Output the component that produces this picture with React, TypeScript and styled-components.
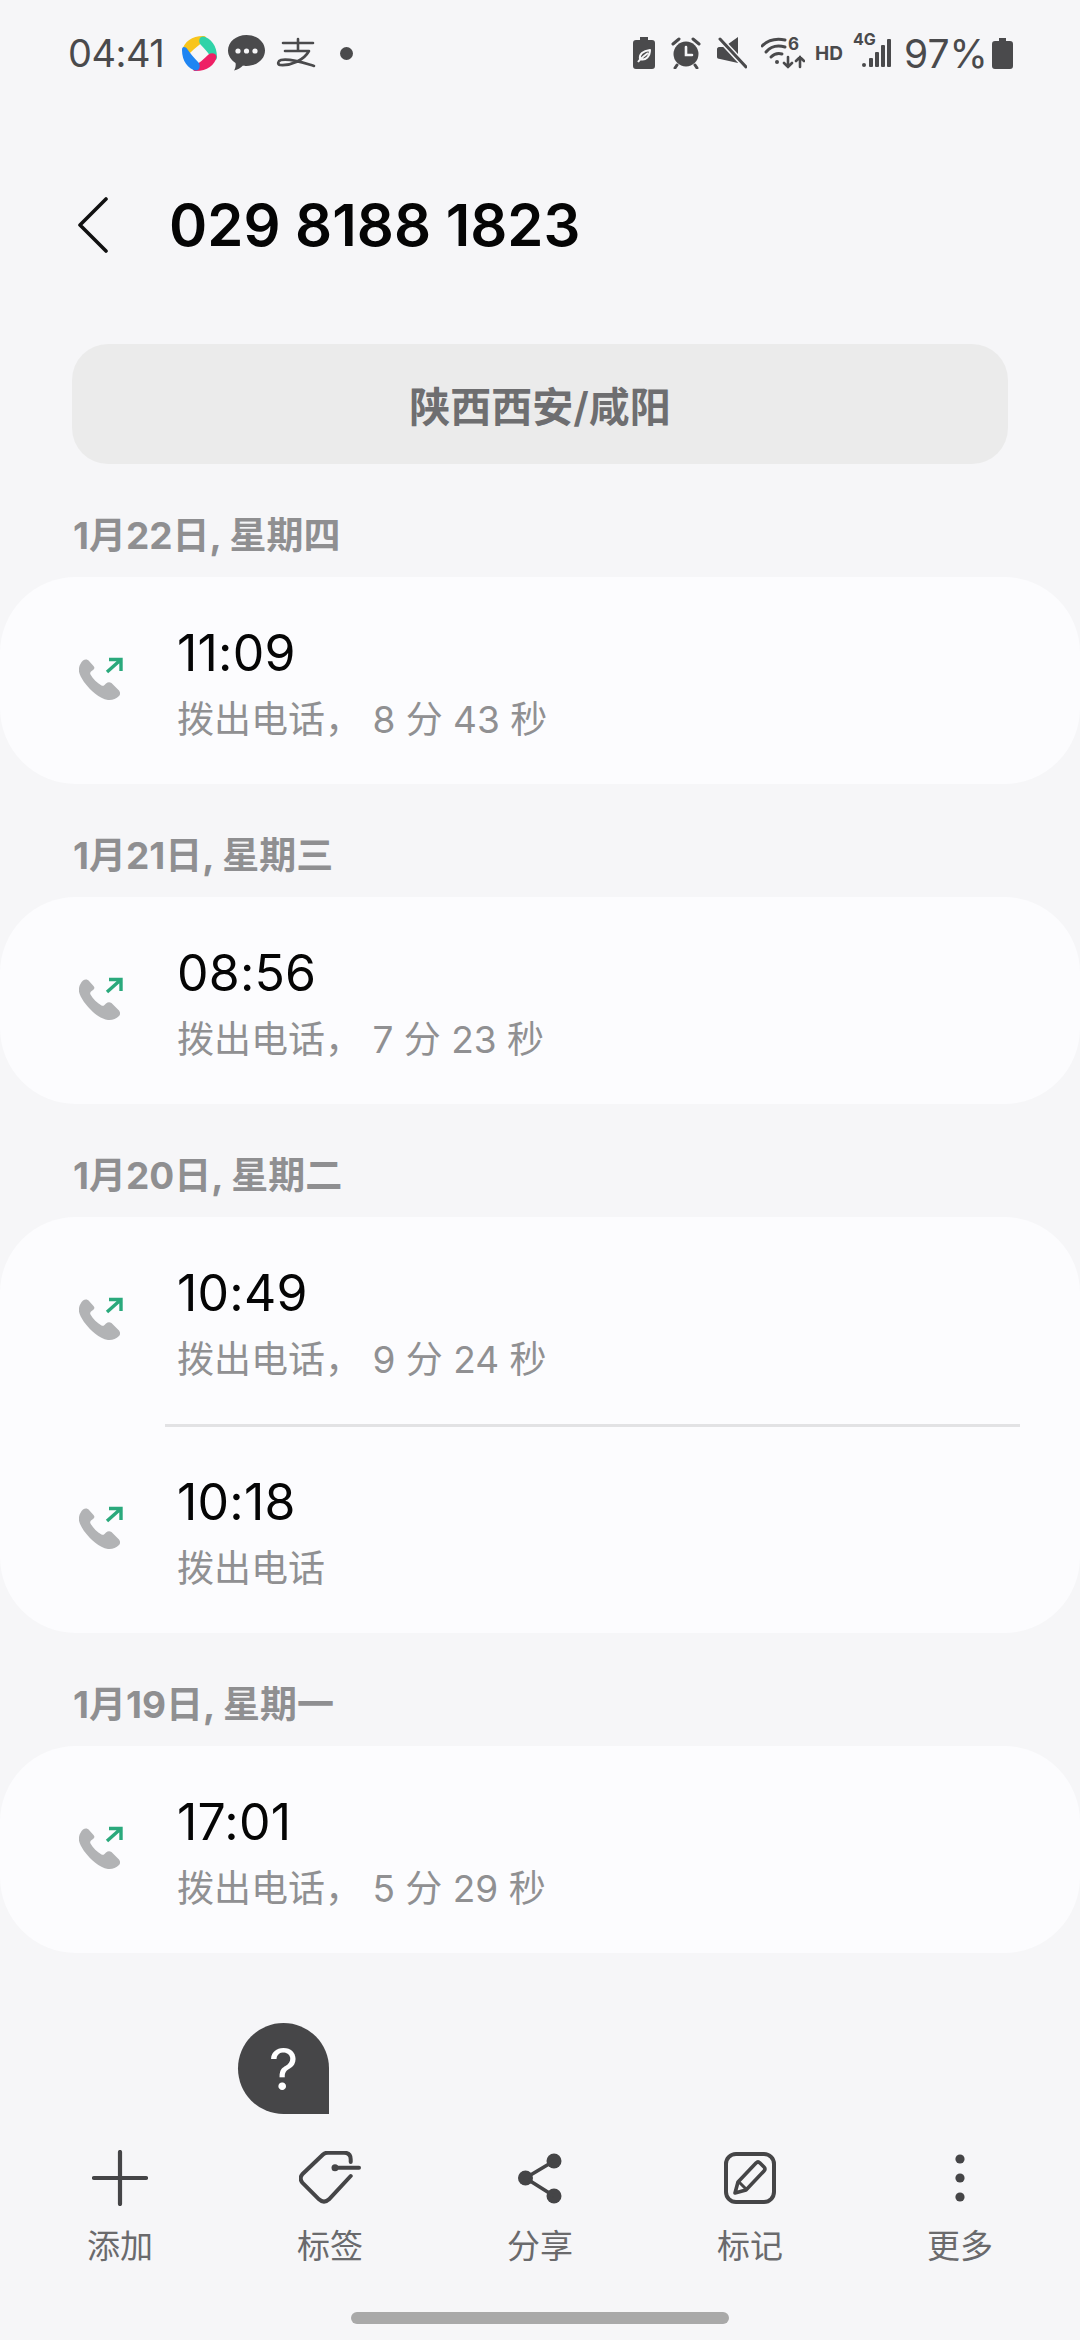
import React from 'react';
import styled, { createGlobalStyle } from 'styled-components';

const Global = createGlobalStyle`
  html, body { margin: 0; padding: 0; background: #f6f6f8; }
  * { box-sizing: border-box; }
`;
const FONT = `Inter, "Noto Sans CJK SC", "Noto Sans", sans-serif`;

const Page = styled.div`
  position: relative; width: 1080px; height: 2340px; background: #f6f6f8;
  display: flex; flex-direction: column; font-family: ${FONT}; overflow: hidden;
`;
const StatusBar = styled.div`
  height: 106px; padding: 0 67px 0 68px; display: flex; align-items: center;
  justify-content: space-between; color: #4a4a4c;
`;
const StatusGroup = styled.div`display: flex; align-items: center;`;
const Clock = styled.span`font-size: 38px; font-weight: 400; width: 113px; line-height: 1; letter-spacing: -0.5px;`;
const NotifDot = styled.span`width: 13px; height: 13px; border-radius: 50%; background: #4a4a4c; margin-left: 24px;`;
const Battery = styled.span`font-size: 39px; font-weight: 400; line-height: 1; width: 81px; margin: 0 7px 0 13px; white-space: nowrap;`;
const SmallBold = styled.span`font-size: 19px; font-weight: 700; line-height: 1; margin: 0 12px 0 10px; width: 26px; white-space: nowrap;`;
const IconSlot = styled.span<{ $w: number; $ml?: number }>`
  position: relative; display: flex; width: ${p => p.$w}px; margin-left: ${p => p.$ml ?? 0}px;
  svg { display: block; }
`;
const TinyOver = styled.span<{ $l: number; $t: number; $s: number }>`
  position: absolute; left: ${p => p.$l}px; top: ${p => p.$t}px; font-size: ${p => p.$s}px;
  font-weight: 700; line-height: 1; color: #4a4a4c;
`;
const Header = styled.div`height: 238px; display: flex; align-items: center; padding-left: 78px;`;
const BackBtn = styled.div`width: 91px; display: flex;`;
const Title = styled.h1`margin: 0; font-size: 58px; font-weight: 600; color: #050505; line-height: 1; letter-spacing: 0;`;
const Region = styled.div`
  margin: 0 72px; height: 120px; border-radius: 36px; background: #ebebeb; display: flex;
  align-items: center; justify-content: center; font-size: 41px; font-weight: 600; color: #6e6e70;
`;
const DayLabel = styled.div`
  height: 113px; padding: 49px 0 0 73px; font-size: 37px; line-height: 46px; font-weight: 700; color: #8f8f91;
`;
const Card = styled.div`background: #fcfcfe; border-radius: 76px;`;
const Row = styled.div`height: 207px; display: flex; align-items: center; padding-left: 79px;`;
const CallIcon = styled.div`width: 99px; display: flex; margin-top: -4px;`;
const RowText = styled.div`display: flex; flex-direction: column; margin-left: -1px; padding-top: 4px;`;
const Time = styled.div`font-size: 50px; line-height: 60px; color: #050505; font-weight: 400; letter-spacing: 0.2px;`;
const Sub = styled.div`font-size: 37px; line-height: 46px; color: #909092; margin-top: 14px; font-weight: 400;`;
const Divider = styled.div`height: 3px; margin: 0 60px -1px 165px; background: #e2e2e4;`;
const Main = styled.div`flex: 1;`;
const Help = styled.div`
  position: absolute; left: 238px; top: 2023px; width: 91px; height: 91px; background: #464648;
  border-radius: 46px 46px 0 46px; color: #fff; display: flex; align-items: center; justify-content: center;
  font-size: 58px; line-height: 1; font-weight: 400;
`;
const Nav = styled.div`display: grid; grid-template-columns: repeat(5, 210px); padding: 0 15px; height: 136px;`;
const NavItem = styled.div`display: flex; flex-direction: column; align-items: center; color: #6a6a6c;`;
const NavIcon = styled.div`height: 68px; display: flex; align-items: center; justify-content: center; color: #454547;`;
const NavLabel = styled.div`font-size: 33px; line-height: 44px; margin-top: 12px;`;
const HomeArea = styled.div`height: 60px; display: flex; justify-content: center; padding-top: 32px;`;
const HomeBar = styled.div`width: 378px; height: 12px; border-radius: 6px; background: #a9a9a9;`;

const Petal = ({ c, r }: { c: string; r: number }) => (
  <path fill={c} transform={`rotate(${r} 18.5 18.5)`} d="M1.500 15C3 7 11 1 22 1C25.500 1 25.500 3 24 5.500C19 9 14 13 9.500 17.500C6 20 1.500 18.500 1.500 15Z" />
);
const Pinwheel = () => (
  <svg width="37" height="37" viewBox="0 0 37 37"><Petal c="#f8c51c" r={0} /><Petal c="#2fd3a8" r={90} /><Petal c="#ee2065" r={180} /><Petal c="#1f85f2" r={270} /></svg>
);
const Chat = () => (
  <svg width="37" height="36" viewBox="0 0 37 36" fill="#4a4a4c">
    <path d="M18.5 0C29 0 37 7 37 15.5S29 31 18.5 31C17 31 16 31 15 30.6C12.5 33 9.500 35 6 35.500C7.500 33 8 30 7.500 28C3 25 0 20.500 0 15.500C0 7 8 0 18.500 0Z" />
    <g fill="#f6f6f8"><circle cx="10" cy="16" r="2.600" /><circle cx="18.500" cy="16" r="2.600" /><circle cx="27" cy="16" r="2.600" /></g>
  </svg>
);
const PayMark = () => (
  <svg width="40" height="32" viewBox="0 0 40 32" fill="none" stroke="#4a4a4c" strokeWidth="2.600" strokeLinecap="round" strokeLinejoin="round">
    <path d="M7 6H37M22 2V13M9 14H33C28 23 15 29 4 28C1 27 2 24 5 23C15 21 28 26 38 29" />
  </svg>
);
const Saver = () => (
  <svg width="22" height="32" viewBox="0 0 22 32">
    <path fill="#4a4a4c" d="M7 0H15V3H19C21 3 22 4 22 6V29C22 31 21 32 19 32H3C1 32 0 31 0 29V6C0 4 1 3 3 3H7Z" />
    <path fill="none" stroke="#f6f6f8" strokeWidth="2" strokeLinejoin="round" d="M5 25C8 21 11 19 15 16M7 22C6 17 10 14 17 13C17 19 13 24 7 22Z" />
  </svg>
);
const Alarm = () => (
  <svg width="30" height="32" viewBox="0 0 30 32">
    <circle cx="15" cy="17" r="12.500" fill="#4a4a4c" />
    <path d="M2 7L8 2M28 7L22 2M6 28L4 31M24 28L26 31" stroke="#4a4a4c" strokeWidth="3" strokeLinecap="round" />
    <path d="M15 10V18H21" fill="none" stroke="#f6f6f8" strokeWidth="2.600" strokeLinecap="round" />
  </svg>
);
const Mute = () => (
  <svg width="30" height="32" viewBox="0 0 30 32">
    <path fill="#4a4a4c" d="M0 12C0 11 1 10 2 10H7L21 0V26L3 22C1 22 0 21 0 20Z" />
    <path d="M2 1L29 30" stroke="#f6f6f8" strokeWidth="6" />
    <path d="M3 2L29 30" stroke="#4a4a4c" strokeWidth="3" strokeLinecap="round" />
  </svg>
);
const Wifi = () => (
  <svg width="44" height="32" viewBox="0 0 44 32" fill="none" stroke="#4a4a4c" strokeWidth="3" strokeLinecap="round">
    <path d="M1 9C7 3 14 1 24 3" />
    <path d="M5 15C10 9 17 8 24 10" />
    <path d="M10 20C13 17 17 16 21 17" />
    <circle cx="16" cy="25" r="2" fill="#4a4a4c" stroke="none" />
    <path d="M27 20V30M23 26L27 30L31 26M39 30V20M35 24L39 20L43 24" strokeWidth="2.600" />
  </svg>
);
const Signal = () => (
  <svg width="38" height="32" viewBox="0 0 38 32" fill="#4a4a4c">
    <circle cx="11" cy="28" r="2" /><rect x="16" y="21" width="4" height="9" rx="1" /><rect x="22" y="15" width="4" height="15" rx="1" /><rect x="28" y="8" width="4" height="22" rx="1" /><rect x="34" y="2" width="4" height="28" rx="1" />
  </svg>
);
const BatteryIcon = () => (
  <svg width="21" height="31" viewBox="0 0 21 31"><path fill="#4a4a4c" d="M7 0H14V3H18C20 3 21 4 21 6V28C21 30 20 31 18 31H3C1 31 0 30 0 28V6C0 4 1 3 3 3H7Z" /></svg>
);
const Back = () => (
  <svg width="30" height="56" viewBox="0 0 30 56" fill="none" stroke="#111" strokeWidth="3.600" strokeLinecap="round" strokeLinejoin="round"><path d="M28 2L2 28L28 54" /></svg>
);
const CallOut = () => (
  <svg width="44" height="44" viewBox="0 0 44 44">
    <path fill="#b2b3b5" transform="translate(0 2)" d="M4 1.500C6 0 8.500 0 10 2L14.500 7C16 8.500 15.500 10 14 11L12 12.500C11 13.500 11 14.500 11.500 15.500C14 20 18 24 22.500 26.500C23.500 27 24.500 27 25.500 26L27 24.500C29 23 30.500 23 32.500 24L39.500 31C41.500 33 41.500 35.500 40 37C37 40 33 41.500 29 41C20 39.500 12 32 5 23C1 17 -1 12 0 9C.5 6 2 3.500 4 1.500Z" />
    <path d="M28 15L41.500 3M30 2.500H42V14" fill="none" stroke="#2aa97c" strokeWidth="3.400" />
  </svg>
);
const Plus = () => (
  <svg width="56" height="56" viewBox="0 0 56 56" stroke="currentColor" strokeWidth="4.200" strokeLinecap="round"><path d="M28 2V54M2 28H54" /></svg>
);
const Tag = () => (
  <svg width="62" height="54" viewBox="0 0 62 54" fill="none" stroke="currentColor" strokeWidth="4" strokeLinecap="round" strokeLinejoin="round">
    <path d="M51.700 25L30 48.300Q25 53 20 48.300L3.300 31.700Q0 27 3.300 23.300L24 3.500Q26 1.700 29 1.700H45Q51.700 1.700 51.700 8.300V11" />
    <path d="M36 16.700H60" />
    <circle cx="36" cy="16.700" r="3.500" fill="currentColor" stroke="none" />
  </svg>
);
const Share = () => (
  <svg width="44" height="56" viewBox="0 0 44 56" fill="currentColor">
    <circle cx="36" cy="11" r="7.500" /><circle cx="7.500" cy="28" r="7.500" /><circle cx="36" cy="46" r="7.500" />
    <path d="M36 11L7.500 28L36 46" fill="none" stroke="currentColor" strokeWidth="3.600" />
  </svg>
);
const Note = () => (
  <svg width="54" height="54" viewBox="0 0 54 54" fill="none" stroke="currentColor" strokeWidth="4" strokeLinejoin="round">
    <rect x="3" y="3" width="48" height="48" rx="10" />
    <path d="M15 31L33 12Q35 10 37 12L41 16Q43 18 41 20L23 39L12 42Z" strokeWidth="3.600" />
    <path d="M16 31L24 39" strokeWidth="3" />
  </svg>
);
const More = () => (
  <svg width="12" height="56" viewBox="0 0 12 56" fill="currentColor"><circle cx="6" cy="9" r="4.600" /><circle cx="6" cy="28" r="4.600" /><circle cx="6" cy="47" r="4.600" /></svg>
);

const days = [
  { label: '1月22日, 星期四', calls: [{ t: '11:09', s: '拨出电话， 8 分 43 秒' }] },
  { label: '1月21日, 星期三', calls: [{ t: '08:56', s: '拨出电话， 7 分 23 秒' }] },
  { label: '1月20日, 星期二', calls: [{ t: '10:49', s: '拨出电话， 9 分 24 秒' }, { t: '10:18', s: '拨出电话' }] },
  { label: '1月19日, 星期一', calls: [{ t: '17:01', s: '拨出电话， 5 分 29 秒' }] },
];
const nav = [
  { l: '添加', i: <Plus /> }, { l: '标签', i: <Tag /> }, { l: '分享', i: <Share /> },
  { l: '标记', i: <Note /> }, { l: '更多', i: <More /> },
];

export default function App() {
  return (
    <Page>
      <Global />
      <StatusBar>
        <StatusGroup>
          <Clock>04:41</Clock>
          <Pinwheel />
          <IconSlot $w={37} $ml={10}><Chat /></IconSlot>
          <IconSlot $w={40} $ml={11}><PayMark /></IconSlot>
          <NotifDot />
        </StatusGroup>
        <StatusGroup>
          <Saver />
          <IconSlot $w={30} $ml={16}><Alarm /></IconSlot>
          <IconSlot $w={30} $ml={16}><Mute /></IconSlot>
          <IconSlot $w={44} $ml={14}>
            <Wifi />
            <TinyOver $l={27} $t={-1} $s={17}>6</TinyOver>
          </IconSlot>
          <SmallBold>HD</SmallBold>
          <IconSlot $w={38}>
            <TinyOver $l={0} $t={-6} $s={16}>4G</TinyOver>
            <Signal />
          </IconSlot>
          <Battery>97%</Battery>
          <BatteryIcon />
        </StatusGroup>
      </StatusBar>
      <Header>
        <BackBtn><Back /></BackBtn>
        <Title>029 8188 1823</Title>
      </Header>
      <Region>陕西西安/咸阳</Region>
      <Main>
        {days.map(d => (
          <React.Fragment key={d.label}>
            <DayLabel>{d.label}</DayLabel>
            <Card>
              {d.calls.map((c, i) => (
                <React.Fragment key={c.t}>
                  {i > 0 && <Divider />}
                  <Row>
                    <CallIcon><CallOut /></CallIcon>
                    <RowText>
                      <Time>{c.t}</Time>
                      <Sub>{c.s}</Sub>
                    </RowText>
                  </Row>
                </React.Fragment>
              ))}
            </Card>
          </React.Fragment>
        ))}
      </Main>
      <Help>?</Help>
      <Nav>
        {nav.map(n => (
          <NavItem key={n.l}>
            <NavIcon>{n.i}</NavIcon>
            <NavLabel>{n.l}</NavLabel>
          </NavItem>
        ))}
      </Nav>
      <HomeArea><HomeBar /></HomeArea>
    </Page>
  );
}
